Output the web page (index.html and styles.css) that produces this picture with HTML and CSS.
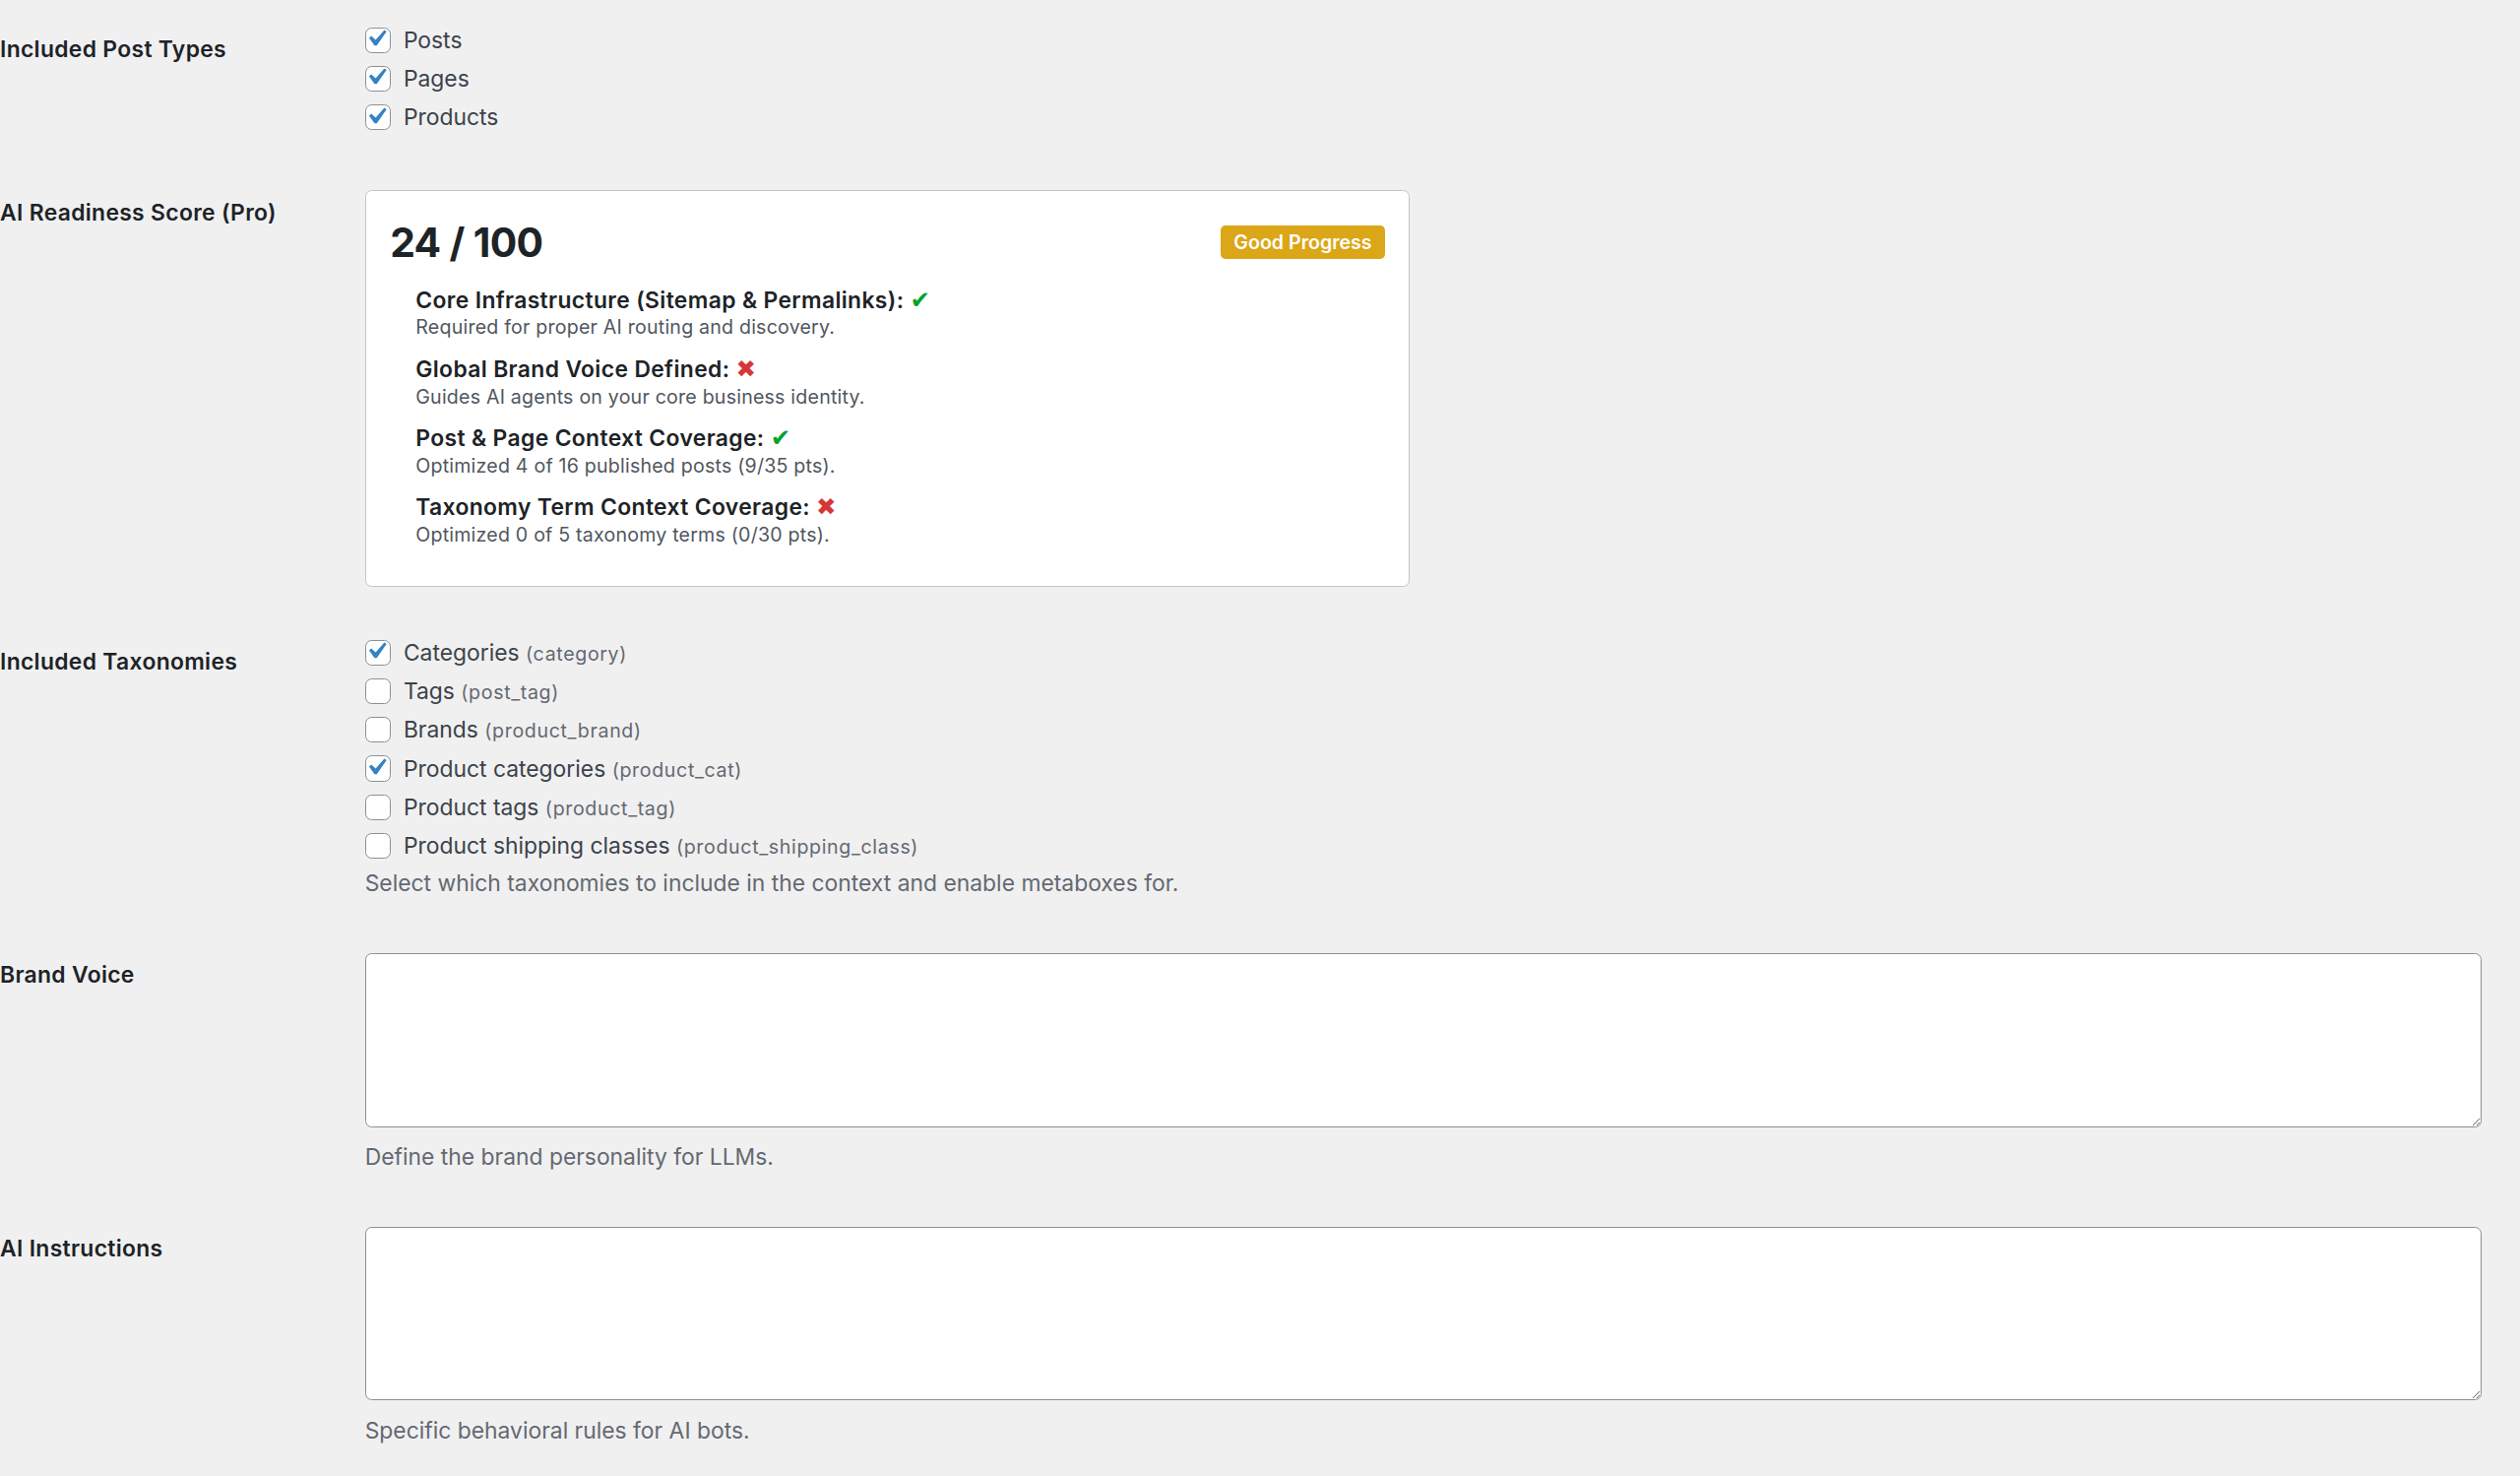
FILE: index.html
```html
<!DOCTYPE html>
<html lang="en">
<head>
<meta charset="utf-8">
<title>Settings</title>
<link rel="stylesheet" href="styles.css">
</head>
<body>
<div class="settings">

  <div class="row row-first">
    <div class="th th-check"><span class="label">Included Post Types</span></div>
    <div class="td">
      <ul class="checks">
        <li><span class="cb on"><svg viewBox="0 0 20 20" class="tick"><path d="M14.83 4.89l1.34.94-5.81 8.38H9.02L5.78 9.67l1.34-1.25 2.57 2.4z"/></svg></span><span class="ctext">Posts</span></li>
        <li><span class="cb on"><svg viewBox="0 0 20 20" class="tick"><path d="M14.83 4.89l1.34.94-5.81 8.38H9.02L5.78 9.67l1.34-1.25 2.57 2.4z"/></svg></span><span class="ctext">Pages</span></li>
        <li><span class="cb on"><svg viewBox="0 0 20 20" class="tick"><path d="M14.83 4.89l1.34.94-5.81 8.38H9.02L5.78 9.67l1.34-1.25 2.57 2.4z"/></svg></span><span class="ctext">Products</span></li>
      </ul>
    </div>
  </div>

  <div class="row">
    <div class="th th-card"><span class="label">AI Readiness Score (Pro)</span></div>
    <div class="td">
      <div class="score-card">
        <div class="score-head">
          <span class="score">24 / 100</span>
          <span class="badge">Good Progress</span>
        </div>
        <ul class="score-items">
          <li>
            <div class="item-title">Core Infrastructure (Sitemap &amp; Permalinks): <span class="ok">✔</span></div>
            <div class="item-desc">Required for proper AI routing and discovery.</div>
          </li>
          <li>
            <div class="item-title">Global Brand Voice Defined: <span class="no">✖</span></div>
            <div class="item-desc">Guides AI agents on your core business identity.</div>
          </li>
          <li>
            <div class="item-title">Post &amp; Page Context Coverage: <span class="ok">✔</span></div>
            <div class="item-desc">Optimized 4 of 16 published posts (9/35 pts).</div>
          </li>
          <li>
            <div class="item-title">Taxonomy Term Context Coverage: <span class="no">✖</span></div>
            <div class="item-desc">Optimized 0 of 5 taxonomy terms (0/30 pts).</div>
          </li>
        </ul>
      </div>
    </div>
  </div>

  <div class="row">
    <div class="th th-check"><span class="label">Included Taxonomies</span></div>
    <div class="td">
      <ul class="checks">
        <li><span class="cb on"><svg viewBox="0 0 20 20" class="tick"><path d="M14.83 4.89l1.34.94-5.81 8.38H9.02L5.78 9.67l1.34-1.25 2.57 2.4z"/></svg></span><span class="ctext">Categories <span class="slug">(category)</span></span></li>
        <li><span class="cb"></span><span class="ctext">Tags <span class="slug">(post_tag)</span></span></li>
        <li><span class="cb"></span><span class="ctext">Brands <span class="slug">(product_brand)</span></span></li>
        <li><span class="cb on"><svg viewBox="0 0 20 20" class="tick"><path d="M14.83 4.89l1.34.94-5.81 8.38H9.02L5.78 9.67l1.34-1.25 2.57 2.4z"/></svg></span><span class="ctext">Product categories <span class="slug">(product_cat)</span></span></li>
        <li><span class="cb"></span><span class="ctext">Product tags <span class="slug">(product_tag)</span></span></li>
        <li><span class="cb"></span><span class="ctext">Product shipping classes <span class="slug">(product_shipping_class)</span></span></li>
      </ul>
      <p class="description desc-list">Select which taxonomies to include in the context and enable metaboxes for.</p>
    </div>
  </div>

  <div class="row">
    <div class="th"><span class="label">Brand Voice</span></div>
    <div class="td">
      <textarea class="large-text" aria-label="Brand Voice"></textarea>
      <p class="description desc-after">Define the brand personality for LLMs.</p>
    </div>
  </div>

  <div class="row">
    <div class="th"><span class="label">AI Instructions</span></div>
    <div class="td">
      <textarea class="large-text" aria-label="AI Instructions"></textarea>
      <p class="description desc-after">Specific behavioral rules for AI bots.</p>
    </div>
  </div>

</div>
</body>
</html>
```

FILE: styles.css
```css
html {
  zoom: 1.633;
}

body {
  margin: 0;
  background: #f0f0f1;
  color: #3c434a;
  font-family: Inter, "Noto Sans", "Liberation Sans", sans-serif;
  font-size: 14px;
  line-height: 1.4;
}

.settings {
  display: flex;
  flex-direction: column;
}

.row {
  display: grid;
  grid-template-columns: 227px 1fr;
  padding: 17px 0;
}

.row-first {
  padding-top: 18px;
}

.th {
  padding-top: 5px;
}

.th-check {
  padding-top: 4px;
}

.th-card {
  padding-top: 6px;
}

.label {
  display: block;
  font-weight: 600;
  font-size: 14px;
  line-height: 18px;
  letter-spacing: 0.2px;
  color: #1d2327;
}

.td {
  padding-right: 24px;
  min-width: 0;
}

/* checkbox lists */
.checks {
  list-style: none;
  margin: -5px 0 -1px;
  padding: 0;
}

.checks li {
  display: flex;
  align-items: center;
  gap: 8px;
  height: 24px;
}

.cb {
  box-sizing: border-box;
  width: 16px;
  height: 16px;
  flex: none;
  border: 1px solid #8c8f94;
  border-radius: 4px;
  background: #fff;
  position: relative;
}

.tick {
  width: 21px;
  height: 21px;
  fill: #3582c4;
  position: absolute;
  left: -4px;
  top: -4px;
}

.ctext {
  font-size: 14px;
  color: #3c434a;
  white-space: nowrap;
}

.slug {
  font-size: 12px;
  letter-spacing: 0.4px;
  color: #646970;
}

.description {
  margin: 4px 0 0;
  font-size: 14px;
  line-height: 18px;
  color: #646970;
}

.desc-list {
  margin-top: 4px;
}

.desc-after {
  margin-top: 10px;
}

/* score card */
.score-card {
  box-sizing: border-box;
  width: 650px;
  height: 247px;
  background: #fff;
  border: 1px solid #c3c4c7;
  border-radius: 4px;
  padding: 16px 15px 0;
  overflow: hidden;
}

.score-head {
  display: flex;
  align-items: center;
  justify-content: space-between;
  height: 32px;
  margin-bottom: 12px;
}

.score {
  font-size: 25px;
  font-weight: 700;
  letter-spacing: -0.4px;
  color: #1d2327;
  line-height: 32px;
}

.badge {
  background: #dba617;
  color: #fff;
  font-size: 12px;
  font-weight: 600;
  line-height: 15px;
  padding: 3px 8px;
  border-radius: 3px;
}

.score-items {
  list-style: none;
  margin: 0;
  padding: 0 0 0 16px;
  display: flex;
  flex-direction: column;
  gap: 9px;
}

.score-items li {
  height: 34px;
}

.item-title {
  height: 17px;
  font-size: 14px;
  font-weight: 600;
  line-height: 17px;
  letter-spacing: 0.22px;
  color: #1d2327;
  white-space: nowrap;
}

.item-desc {
  height: 17px;
  font-size: 12px;
  line-height: 17px;
  letter-spacing: 0.13px;
  color: #50575e;
}

.ok,
.no {
  font-family: "DejaVu Sans", sans-serif;
  font-weight: 400;
  font-size: 15px;
  line-height: 0;
  letter-spacing: 0;
}

.ok {
  color: #00a32a;
}

.no {
  color: #d63638;
}

/* textareas */
.large-text {
  display: block;
  box-sizing: border-box;
  width: 100%;
  height: 108px;
  margin: 0;
  padding: 2px 6px;
  background: #fff;
  border: 1px solid #8c8f94;
  border-radius: 4px;
  font-family: inherit;
  font-size: 14px;
  color: #2c3338;
}
```
